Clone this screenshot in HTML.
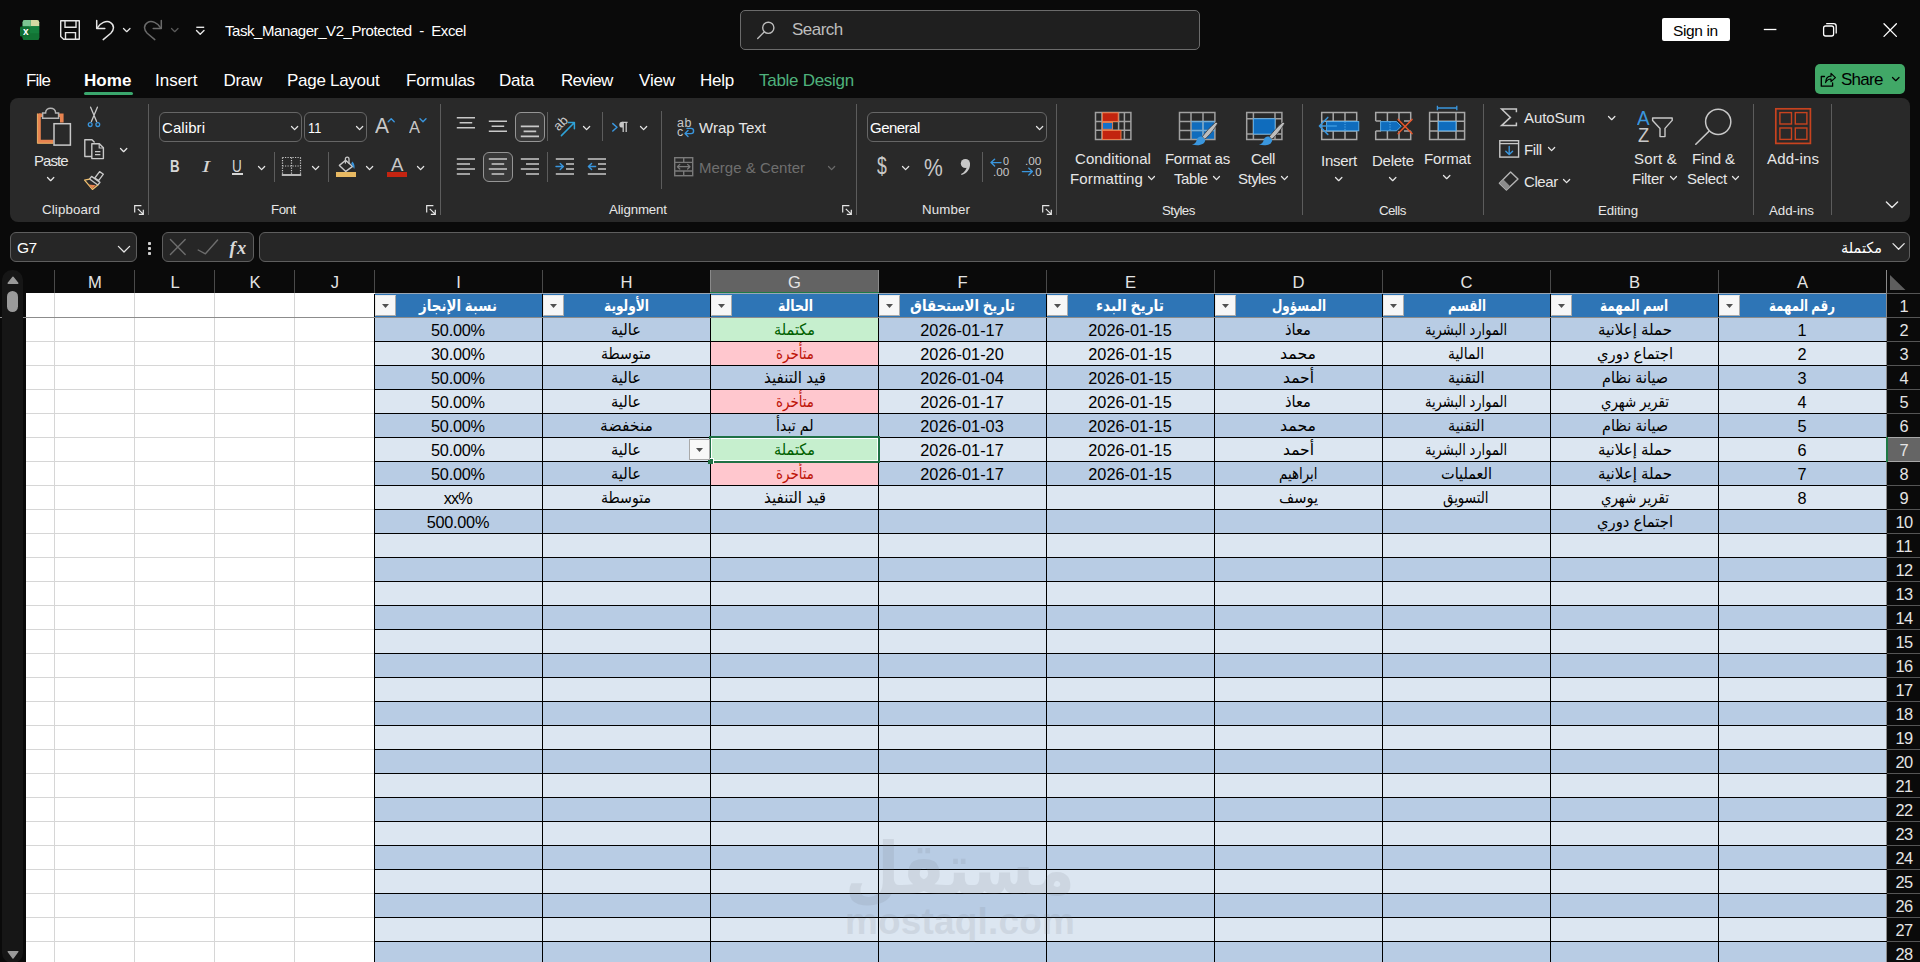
<!DOCTYPE html>
<html lang="en"><head><meta charset="utf-8"><title>Task_Manager_V2_Protected - Excel</title>
<style>
html,body{margin:0;padding:0;}
body{width:1920px;height:962px;overflow:hidden;background:#0a0a0a;position:relative;font-family:"Liberation Sans","DejaVu Sans",sans-serif;}
.b{position:absolute;box-sizing:border-box;display:block;}
.t{position:absolute;white-space:pre;line-height:1.2;transform-origin:0 0;font-family:"Liberation Sans","DejaVu Sans",sans-serif;}
.ar{direction:rtl;unicode-bidi:isolate;}
.bm{display:inline-block;width:0;height:0;vertical-align:baseline;}
svg{overflow:visible;}
.serif{font-family:"Liberation Serif","DejaVu Serif",serif;}
.wm{opacity:.13;}

</style></head>
<body>
<span class="t " style="font-size:15px;color:#ffffff;letter-spacing:-0.434px;left:225.00px;top:22.00px;">Task_Manager_V2_Protected  -  Excel</span>
<div class="b" style="left:740px;top:10px;width:460px;height:40px;background:#1f1f1f;border:1px solid #6b6b6b;border-radius:5px;"></div>
<span class="t " style="font-size:17px;color:#bdbdbd;letter-spacing:-0.523px;left:792.00px;top:20.00px;">Search</span>
<div class="b" style="left:1662px;top:18px;width:68px;height:23px;background:#ffffff;border-radius:2px;"></div>
<span class="t " style="font-size:15.5px;color:#000;letter-spacing:-0.370px;left:1673.00px;top:22.00px;">Sign in</span>
<div class="b" style="left:1815px;top:64px;width:90px;height:30px;background:#41a867;border-radius:5px;"></div>
<span class="t " style="font-size:17px;color:#000;letter-spacing:-0.750px;left:1841.00px;top:69.50px;">Share</span>
<span class="t " style="font-size:17px;color:#fff;letter-spacing:-0.830px;left:26.00px;top:71.00px;">File</span>
<span class="t " style="font-size:17px;color:#fff;font-weight:700;letter-spacing:0.076px;left:84.00px;top:71.00px;">Home</span>
<span class="t " style="font-size:17px;color:#fff;letter-spacing:-0.006px;left:155.00px;top:71.00px;">Insert</span>
<span class="t " style="font-size:17px;color:#fff;letter-spacing:-0.335px;left:223.50px;top:71.00px;">Draw</span>
<span class="t " style="font-size:17px;color:#fff;letter-spacing:-0.283px;left:287.00px;top:71.00px;">Page Layout</span>
<span class="t " style="font-size:17px;color:#fff;letter-spacing:-0.248px;left:406.00px;top:71.00px;">Formulas</span>
<span class="t " style="font-size:17px;color:#fff;letter-spacing:-0.263px;left:499.00px;top:71.00px;">Data</span>
<span class="t " style="font-size:17px;color:#fff;letter-spacing:-0.682px;left:561.00px;top:71.00px;">Review</span>
<span class="t " style="font-size:17px;color:#fff;letter-spacing:-0.156px;left:639.00px;top:71.00px;">View</span>
<span class="t " style="font-size:17px;color:#fff;letter-spacing:-0.277px;left:700.00px;top:71.00px;">Help</span>
<span class="t " style="font-size:17px;color:#4fb27c;letter-spacing:-0.285px;left:759.00px;top:71.00px;">Table Design</span>
<div class="b" style="left:84px;top:92px;width:49px;height:3px;background:#3aa76d;border-radius:1.5px;"></div>
<div class="b" style="left:10px;top:98px;width:1900px;height:124px;background:#292929;border-radius:8px;"></div>
<div class="b" style="left:148px;top:104px;width:1px;height:111px;background:#5c5c5c;"></div>
<div class="b" style="left:440px;top:104px;width:1px;height:111px;background:#5c5c5c;"></div>
<div class="b" style="left:856px;top:104px;width:1px;height:111px;background:#5c5c5c;"></div>
<div class="b" style="left:1056px;top:104px;width:1px;height:111px;background:#5c5c5c;"></div>
<div class="b" style="left:1302px;top:104px;width:1px;height:111px;background:#5c5c5c;"></div>
<div class="b" style="left:1483px;top:104px;width:1px;height:111px;background:#5c5c5c;"></div>
<div class="b" style="left:1753px;top:104px;width:1px;height:111px;background:#5c5c5c;"></div>
<div class="b" style="left:1831px;top:104px;width:1px;height:111px;background:#5c5c5c;"></div>
<div class="b" style="left:274px;top:152px;width:1px;height:30px;background:#5c5c5c;"></div>
<div class="b" style="left:328px;top:152px;width:1px;height:30px;background:#5c5c5c;"></div>
<div class="b" style="left:547px;top:112px;width:1px;height:29px;background:#5c5c5c;"></div>
<div class="b" style="left:602px;top:112px;width:1px;height:29px;background:#5c5c5c;"></div>
<div class="b" style="left:547px;top:152px;width:1px;height:30px;background:#5c5c5c;"></div>
<div class="b" style="left:661px;top:111px;width:1px;height:78px;background:#5c5c5c;"></div>
<div class="b" style="left:982px;top:152px;width:1px;height:30px;background:#5c5c5c;"></div>
<span class="t " style="font-size:13.3px;color:#e6e6e6;letter-spacing:0.127px;left:42.00px;top:202.00px;">Clipboard</span>
<span class="t " style="font-size:13.3px;color:#e6e6e6;letter-spacing:-0.460px;left:271.00px;top:202.00px;">Font</span>
<span class="t " style="font-size:13.3px;color:#e6e6e6;letter-spacing:-0.134px;left:609.00px;top:202.00px;">Alignment</span>
<span class="t " style="font-size:13.3px;color:#e6e6e6;letter-spacing:0.128px;left:922.00px;top:202.00px;">Number</span>
<span class="t " style="font-size:13.3px;color:#e6e6e6;letter-spacing:-0.585px;left:1162.00px;top:203.00px;">Styles</span>
<span class="t " style="font-size:13.3px;color:#e6e6e6;letter-spacing:-0.569px;left:1379.00px;top:203.00px;">Cells</span>
<span class="t " style="font-size:13.3px;color:#e6e6e6;letter-spacing:-0.103px;left:1598.00px;top:203.00px;">Editing</span>
<span class="t " style="font-size:13.3px;color:#e6e6e6;letter-spacing:-0.014px;left:1769.00px;top:203.00px;">Add-ins</span>
<span class="t " style="font-size:15px;color:#e6e6e6;letter-spacing:-0.969px;left:34.00px;top:152.00px;">Paste</span>
<div class="b" style="left:159px;top:112px;width:143px;height:30px;background:#292929;border:1px solid #666;border-radius:6px;"></div>
<div class="b" style="left:304px;top:112px;width:63px;height:30px;background:#292929;border:1px solid #666;border-radius:6px;"></div>
<span class="t " style="font-size:15px;color:#fff;letter-spacing:0.075px;left:162.00px;top:119.00px;">Calibri</span>
<span class="t " style="font-size:15px;color:#fff;transform:scaleX(0.8473);left:308.40px;top:119.00px;">11</span>
<span class="t " style="font-size:17px;color:#d6d6d6;font-weight:700;transform:scaleX(0.7817);left:169.60px;top:156.80px;">B</span>
<span class="t serif" style="font-size:17.5px;color:#d6d6d6;font-style:italic;transform:scaleX(1.3727);left:202.00px;top:155.80px;">I</span>
<span class="t " style="font-size:16.8px;color:#d6d6d6;transform:scaleX(0.8082);left:232.40px;top:156.80px;">U</span>
<div class="b" style="left:231.5px;top:173px;width:11.7px;height:1.8px;background:#d6d6d6;"></div>
<div class="b" style="left:515px;top:112px;width:30px;height:30px;background:#383838;border:1px solid #959595;border-radius:6px;"></div>
<div class="b" style="left:483px;top:152px;width:30px;height:30px;background:#383838;border:1px solid #959595;border-radius:6px;"></div>
<span class="t " style="font-size:15px;color:#e6e6e6;left:699.00px;top:119.00px;">Wrap Text</span>
<span class="t " style="font-size:15px;color:#6f6f6f;letter-spacing:0.008px;left:699.00px;top:159.00px;">Merge &amp; Center</span>
<div class="b" style="left:867px;top:112px;width:180px;height:30px;background:#292929;border:1px solid #666;border-radius:6px;"></div>
<span class="t " style="font-size:15px;color:#fff;letter-spacing:-0.519px;left:870.00px;top:119.00px;">General</span>
<span class="t " style="font-size:23.5px;color:#c8c8c8;transform:scaleX(0.7493);left:876.60px;top:152.40px;">$</span>
<span class="t " style="font-size:24.5px;color:#c8c8c8;transform:scaleX(0.8625);left:923.60px;top:153.00px;">%</span>
<span class="t " style="font-size:15px;color:#e6e6e6;letter-spacing:0.089px;left:1075.00px;top:149.60px;">Conditional</span>
<span class="t " style="font-size:15px;color:#e6e6e6;letter-spacing:0.137px;left:1070.00px;top:169.60px;">Formatting</span>
<span class="t " style="font-size:15px;color:#e6e6e6;letter-spacing:-0.296px;left:1165.00px;top:149.60px;">Format as</span>
<span class="t " style="font-size:15px;color:#e6e6e6;letter-spacing:-0.413px;left:1174.00px;top:169.60px;">Table</span>
<span class="t " style="font-size:15px;color:#e6e6e6;letter-spacing:-0.527px;left:1251.00px;top:149.60px;">Cell</span>
<span class="t " style="font-size:15px;color:#e6e6e6;letter-spacing:-0.520px;left:1238.00px;top:169.60px;">Styles</span>
<span class="t " style="font-size:15px;color:#e6e6e6;letter-spacing:-0.276px;left:1321.00px;top:151.80px;">Insert</span>
<span class="t " style="font-size:15px;color:#e6e6e6;letter-spacing:-0.247px;left:1372.00px;top:151.80px;">Delete</span>
<span class="t " style="font-size:15px;color:#e6e6e6;letter-spacing:-0.094px;left:1424.00px;top:149.60px;">Format</span>
<span class="t " style="font-size:15px;color:#e6e6e6;letter-spacing:-0.108px;left:1524.00px;top:109.00px;">AutoSum</span>
<span class="t " style="font-size:15px;color:#e6e6e6;letter-spacing:-0.335px;left:1524.00px;top:141.00px;">Fill</span>
<span class="t " style="font-size:15px;color:#e6e6e6;letter-spacing:-0.413px;left:1524.00px;top:173.00px;">Clear</span>
<span class="t " style="font-size:15px;color:#e6e6e6;letter-spacing:0.239px;left:1634.00px;top:149.60px;">Sort &amp;</span>
<span class="t " style="font-size:15px;color:#e6e6e6;letter-spacing:-0.244px;left:1632.00px;top:169.60px;">Filter</span>
<span class="t " style="font-size:15px;color:#e6e6e6;letter-spacing:-0.065px;left:1692.00px;top:149.60px;">Find &amp;</span>
<span class="t " style="font-size:15px;color:#e6e6e6;letter-spacing:-0.310px;left:1687.00px;top:169.60px;">Select</span>
<span class="t " style="font-size:15px;color:#e6e6e6;letter-spacing:0.175px;left:1767.00px;top:150.00px;">Add-ins</span>
<div class="b" style="left:10px;top:232px;width:127px;height:30px;background:#262626;border:1px solid #5e5e5e;border-radius:6px;"></div>
<span class="t " style="font-size:15.5px;color:#fff;letter-spacing:-0.458px;left:17.00px;top:238.50px;">G7</span>
<div class="b" style="left:162px;top:232px;width:92px;height:30px;background:#262626;border:1px solid #5e5e5e;border-radius:6px;"></div>
<div class="b" style="left:259px;top:232px;width:1651px;height:30px;background:#262626;border:1px solid #5e5e5e;border-radius:6px;"></div>
<span class="t ar" style="font-size:15px;color:#fff;transform:scaleX(0.9640);left:1841.00px;top:239.00px;">مكتملة</span>
<span class="t serif" style="font-size:18.5px;color:#d8d8d8;font-weight:700;font-style:italic;letter-spacing:1.385px;left:229.50px;top:236.50px;">fx</span>
<div class="b" style="left:26px;top:293px;width:1861px;height:669px;background:#ffffff;"></div>
<div class="b" style="left:54px;top:270px;width:1px;height:23px;background:#4a4a4a;"></div>
<div class="b" style="left:134px;top:270px;width:1px;height:23px;background:#4a4a4a;"></div>
<div class="b" style="left:214px;top:270px;width:1px;height:23px;background:#4a4a4a;"></div>
<div class="b" style="left:294px;top:270px;width:1px;height:23px;background:#4a4a4a;"></div>
<div class="b" style="left:374px;top:270px;width:1px;height:23px;background:#4a4a4a;"></div>
<div class="b" style="left:542px;top:270px;width:1px;height:23px;background:#4a4a4a;"></div>
<div class="b" style="left:710px;top:270px;width:1px;height:23px;background:#4a4a4a;"></div>
<div class="b" style="left:878px;top:270px;width:1px;height:23px;background:#4a4a4a;"></div>
<div class="b" style="left:1046px;top:270px;width:1px;height:23px;background:#4a4a4a;"></div>
<div class="b" style="left:1214px;top:270px;width:1px;height:23px;background:#4a4a4a;"></div>
<div class="b" style="left:1382px;top:270px;width:1px;height:23px;background:#4a4a4a;"></div>
<div class="b" style="left:1550px;top:270px;width:1px;height:23px;background:#4a4a4a;"></div>
<div class="b" style="left:1718px;top:270px;width:1px;height:23px;background:#4a4a4a;"></div>
<div class="b" style="left:1886px;top:270px;width:1px;height:23px;background:#4a4a4a;"></div>
<div class="b" style="left:1886px;top:270px;width:1px;height:692px;background:#8a8a8a;"></div>
<div class="b" style="left:710px;top:270px;width:169px;height:22px;background:#636363;"></div>
<div class="b" style="left:710px;top:270px;width:1px;height:22px;background:#8a8a8a;"></div>
<div class="b" style="left:878px;top:270px;width:1px;height:22px;background:#8a8a8a;"></div>
<div class="b" style="left:710px;top:292px;width:169px;height:2px;background:#1e7a45;"></div>
<span class="t " style="font-size:16.6px;color:#e4e4e4;left:456.19px;top:273.00px;">I</span>
<span class="t " style="font-size:16.6px;color:#e4e4e4;left:620.51px;top:273.00px;">H</span>
<span class="t " style="font-size:16.6px;color:#e4e4e4;left:788.04px;top:273.00px;">G</span>
<span class="t " style="font-size:16.6px;color:#e4e4e4;left:957.43px;top:273.00px;">F</span>
<span class="t " style="font-size:16.6px;color:#e4e4e4;left:1124.96px;top:273.00px;">E</span>
<span class="t " style="font-size:16.6px;color:#e4e4e4;left:1292.51px;top:273.00px;">D</span>
<span class="t " style="font-size:16.6px;color:#e4e4e4;left:1460.51px;top:273.00px;">C</span>
<span class="t " style="font-size:16.6px;color:#e4e4e4;left:1628.96px;top:273.00px;">B</span>
<span class="t " style="font-size:16.6px;color:#e4e4e4;left:1796.96px;top:273.00px;">A</span>
<span class="t " style="font-size:16.6px;color:#e4e4e4;left:88.09px;top:273.00px;">M</span>
<span class="t " style="font-size:16.6px;color:#e4e4e4;left:170.38px;top:273.00px;">L</span>
<span class="t " style="font-size:16.6px;color:#e4e4e4;left:249.46px;top:273.00px;">K</span>
<span class="t " style="font-size:16.6px;color:#e4e4e4;left:330.85px;top:273.00px;">J</span>
<div class="b" style="left:54px;top:293px;width:1px;height:669px;background:#d6d6d6;"></div>
<div class="b" style="left:134px;top:293px;width:1px;height:669px;background:#d6d6d6;"></div>
<div class="b" style="left:214px;top:293px;width:1px;height:669px;background:#d6d6d6;"></div>
<div class="b" style="left:294px;top:293px;width:1px;height:669px;background:#d6d6d6;"></div>
<div class="b" style="left:26px;top:341px;width:348px;height:1px;background:#d6d6d6;"></div>
<div class="b" style="left:26px;top:365px;width:348px;height:1px;background:#d6d6d6;"></div>
<div class="b" style="left:26px;top:389px;width:348px;height:1px;background:#d6d6d6;"></div>
<div class="b" style="left:26px;top:413px;width:348px;height:1px;background:#d6d6d6;"></div>
<div class="b" style="left:26px;top:437px;width:348px;height:1px;background:#d6d6d6;"></div>
<div class="b" style="left:26px;top:461px;width:348px;height:1px;background:#d6d6d6;"></div>
<div class="b" style="left:26px;top:485px;width:348px;height:1px;background:#d6d6d6;"></div>
<div class="b" style="left:26px;top:509px;width:348px;height:1px;background:#d6d6d6;"></div>
<div class="b" style="left:26px;top:533px;width:348px;height:1px;background:#d6d6d6;"></div>
<div class="b" style="left:26px;top:557px;width:348px;height:1px;background:#d6d6d6;"></div>
<div class="b" style="left:26px;top:581px;width:348px;height:1px;background:#d6d6d6;"></div>
<div class="b" style="left:26px;top:605px;width:348px;height:1px;background:#d6d6d6;"></div>
<div class="b" style="left:26px;top:629px;width:348px;height:1px;background:#d6d6d6;"></div>
<div class="b" style="left:26px;top:653px;width:348px;height:1px;background:#d6d6d6;"></div>
<div class="b" style="left:26px;top:677px;width:348px;height:1px;background:#d6d6d6;"></div>
<div class="b" style="left:26px;top:701px;width:348px;height:1px;background:#d6d6d6;"></div>
<div class="b" style="left:26px;top:725px;width:348px;height:1px;background:#d6d6d6;"></div>
<div class="b" style="left:26px;top:749px;width:348px;height:1px;background:#d6d6d6;"></div>
<div class="b" style="left:26px;top:773px;width:348px;height:1px;background:#d6d6d6;"></div>
<div class="b" style="left:26px;top:797px;width:348px;height:1px;background:#d6d6d6;"></div>
<div class="b" style="left:26px;top:821px;width:348px;height:1px;background:#d6d6d6;"></div>
<div class="b" style="left:26px;top:845px;width:348px;height:1px;background:#d6d6d6;"></div>
<div class="b" style="left:26px;top:869px;width:348px;height:1px;background:#d6d6d6;"></div>
<div class="b" style="left:26px;top:893px;width:348px;height:1px;background:#d6d6d6;"></div>
<div class="b" style="left:26px;top:917px;width:348px;height:1px;background:#d6d6d6;"></div>
<div class="b" style="left:26px;top:941px;width:348px;height:1px;background:#d6d6d6;"></div>
<div class="b" style="left:26px;top:965px;width:348px;height:1px;background:#d6d6d6;"></div>
<div class="b" style="left:375px;top:293px;width:1511px;height:1px;background:#9aa7b5;"></div>
<div class="b" style="left:375px;top:294px;width:1511px;height:23px;background:#2e75b6;"></div>
<div class="b" style="left:375px;top:318px;width:1511px;height:23px;background:#b8cce4;"></div>
<div class="b" style="left:375px;top:342px;width:1511px;height:23px;background:#dce6f1;"></div>
<div class="b" style="left:375px;top:366px;width:1511px;height:23px;background:#b8cce4;"></div>
<div class="b" style="left:375px;top:390px;width:1511px;height:23px;background:#dce6f1;"></div>
<div class="b" style="left:375px;top:414px;width:1511px;height:23px;background:#b8cce4;"></div>
<div class="b" style="left:375px;top:438px;width:1511px;height:23px;background:#dce6f1;"></div>
<div class="b" style="left:375px;top:462px;width:1511px;height:23px;background:#b8cce4;"></div>
<div class="b" style="left:375px;top:486px;width:1511px;height:23px;background:#dce6f1;"></div>
<div class="b" style="left:375px;top:510px;width:1511px;height:23px;background:#b8cce4;"></div>
<div class="b" style="left:375px;top:534px;width:1511px;height:23px;background:#dce6f1;"></div>
<div class="b" style="left:375px;top:558px;width:1511px;height:23px;background:#b8cce4;"></div>
<div class="b" style="left:375px;top:582px;width:1511px;height:23px;background:#dce6f1;"></div>
<div class="b" style="left:375px;top:606px;width:1511px;height:23px;background:#b8cce4;"></div>
<div class="b" style="left:375px;top:630px;width:1511px;height:23px;background:#dce6f1;"></div>
<div class="b" style="left:375px;top:654px;width:1511px;height:23px;background:#b8cce4;"></div>
<div class="b" style="left:375px;top:678px;width:1511px;height:23px;background:#dce6f1;"></div>
<div class="b" style="left:375px;top:702px;width:1511px;height:23px;background:#b8cce4;"></div>
<div class="b" style="left:375px;top:726px;width:1511px;height:23px;background:#dce6f1;"></div>
<div class="b" style="left:375px;top:750px;width:1511px;height:23px;background:#b8cce4;"></div>
<div class="b" style="left:375px;top:774px;width:1511px;height:23px;background:#dce6f1;"></div>
<div class="b" style="left:375px;top:798px;width:1511px;height:23px;background:#b8cce4;"></div>
<div class="b" style="left:375px;top:822px;width:1511px;height:23px;background:#dce6f1;"></div>
<div class="b" style="left:375px;top:846px;width:1511px;height:23px;background:#b8cce4;"></div>
<div class="b" style="left:375px;top:870px;width:1511px;height:23px;background:#dce6f1;"></div>
<div class="b" style="left:375px;top:894px;width:1511px;height:23px;background:#b8cce4;"></div>
<div class="b" style="left:375px;top:918px;width:1511px;height:23px;background:#dce6f1;"></div>
<div class="b" style="left:375px;top:942px;width:1511px;height:23px;background:#b8cce4;"></div>
<div class="b" style="left:375px;top:966px;width:1511px;height:23px;background:#dce6f1;"></div>
<div class="b" style="left:711px;top:318px;width:167px;height:23px;background:#c6efce;"></div>
<div class="b" style="left:711px;top:342px;width:167px;height:23px;background:#ffc7ce;"></div>
<div class="b" style="left:711px;top:390px;width:167px;height:23px;background:#ffc7ce;"></div>
<div class="b" style="left:711px;top:438px;width:167px;height:23px;background:#c6efce;"></div>
<div class="b" style="left:711px;top:462px;width:167px;height:23px;background:#ffc7ce;"></div>
<div class="b" style="left:374px;top:341px;width:1513px;height:1px;background:#000;"></div>
<div class="b" style="left:374px;top:365px;width:1513px;height:1px;background:#000;"></div>
<div class="b" style="left:374px;top:389px;width:1513px;height:1px;background:#000;"></div>
<div class="b" style="left:374px;top:413px;width:1513px;height:1px;background:#000;"></div>
<div class="b" style="left:374px;top:437px;width:1513px;height:1px;background:#000;"></div>
<div class="b" style="left:374px;top:461px;width:1513px;height:1px;background:#000;"></div>
<div class="b" style="left:374px;top:485px;width:1513px;height:1px;background:#000;"></div>
<div class="b" style="left:374px;top:509px;width:1513px;height:1px;background:#000;"></div>
<div class="b" style="left:374px;top:533px;width:1513px;height:1px;background:#000;"></div>
<div class="b" style="left:374px;top:557px;width:1513px;height:1px;background:#000;"></div>
<div class="b" style="left:374px;top:581px;width:1513px;height:1px;background:#000;"></div>
<div class="b" style="left:374px;top:605px;width:1513px;height:1px;background:#000;"></div>
<div class="b" style="left:374px;top:629px;width:1513px;height:1px;background:#000;"></div>
<div class="b" style="left:374px;top:653px;width:1513px;height:1px;background:#000;"></div>
<div class="b" style="left:374px;top:677px;width:1513px;height:1px;background:#000;"></div>
<div class="b" style="left:374px;top:701px;width:1513px;height:1px;background:#000;"></div>
<div class="b" style="left:374px;top:725px;width:1513px;height:1px;background:#000;"></div>
<div class="b" style="left:374px;top:749px;width:1513px;height:1px;background:#000;"></div>
<div class="b" style="left:374px;top:773px;width:1513px;height:1px;background:#000;"></div>
<div class="b" style="left:374px;top:797px;width:1513px;height:1px;background:#000;"></div>
<div class="b" style="left:374px;top:821px;width:1513px;height:1px;background:#000;"></div>
<div class="b" style="left:374px;top:845px;width:1513px;height:1px;background:#000;"></div>
<div class="b" style="left:374px;top:869px;width:1513px;height:1px;background:#000;"></div>
<div class="b" style="left:374px;top:893px;width:1513px;height:1px;background:#000;"></div>
<div class="b" style="left:374px;top:917px;width:1513px;height:1px;background:#000;"></div>
<div class="b" style="left:374px;top:941px;width:1513px;height:1px;background:#000;"></div>
<div class="b" style="left:374px;top:965px;width:1513px;height:1px;background:#000;"></div>
<div class="b" style="left:374px;top:294px;width:1px;height:668px;background:#000;"></div>
<div class="b" style="left:542px;top:294px;width:1px;height:668px;background:#000;"></div>
<div class="b" style="left:710px;top:294px;width:1px;height:668px;background:#000;"></div>
<div class="b" style="left:878px;top:294px;width:1px;height:668px;background:#000;"></div>
<div class="b" style="left:1046px;top:294px;width:1px;height:668px;background:#000;"></div>
<div class="b" style="left:1214px;top:294px;width:1px;height:668px;background:#000;"></div>
<div class="b" style="left:1382px;top:294px;width:1px;height:668px;background:#000;"></div>
<div class="b" style="left:1550px;top:294px;width:1px;height:668px;background:#000;"></div>
<div class="b" style="left:1718px;top:294px;width:1px;height:668px;background:#000;"></div>
<div class="b" style="left:0px;top:317px;width:1920px;height:1px;background:#8c8c8c;"></div>
<div class="b" style="left:1887px;top:270px;width:33px;height:692px;background:#0a0a0a;"></div>
<div class="b" style="left:1887px;top:293px;width:33px;height:1px;background:#555555;"></div>
<div class="b" style="left:1887px;top:317px;width:33px;height:1px;background:#555555;"></div>
<div class="b" style="left:1887px;top:341px;width:33px;height:1px;background:#555555;"></div>
<div class="b" style="left:1887px;top:365px;width:33px;height:1px;background:#555555;"></div>
<div class="b" style="left:1887px;top:389px;width:33px;height:1px;background:#555555;"></div>
<div class="b" style="left:1887px;top:413px;width:33px;height:1px;background:#555555;"></div>
<div class="b" style="left:1887px;top:437px;width:33px;height:1px;background:#555555;"></div>
<div class="b" style="left:1887px;top:461px;width:33px;height:1px;background:#555555;"></div>
<div class="b" style="left:1887px;top:485px;width:33px;height:1px;background:#555555;"></div>
<div class="b" style="left:1887px;top:509px;width:33px;height:1px;background:#555555;"></div>
<div class="b" style="left:1887px;top:533px;width:33px;height:1px;background:#555555;"></div>
<div class="b" style="left:1887px;top:557px;width:33px;height:1px;background:#555555;"></div>
<div class="b" style="left:1887px;top:581px;width:33px;height:1px;background:#555555;"></div>
<div class="b" style="left:1887px;top:605px;width:33px;height:1px;background:#555555;"></div>
<div class="b" style="left:1887px;top:629px;width:33px;height:1px;background:#555555;"></div>
<div class="b" style="left:1887px;top:653px;width:33px;height:1px;background:#555555;"></div>
<div class="b" style="left:1887px;top:677px;width:33px;height:1px;background:#555555;"></div>
<div class="b" style="left:1887px;top:701px;width:33px;height:1px;background:#555555;"></div>
<div class="b" style="left:1887px;top:725px;width:33px;height:1px;background:#555555;"></div>
<div class="b" style="left:1887px;top:749px;width:33px;height:1px;background:#555555;"></div>
<div class="b" style="left:1887px;top:773px;width:33px;height:1px;background:#555555;"></div>
<div class="b" style="left:1887px;top:797px;width:33px;height:1px;background:#555555;"></div>
<div class="b" style="left:1887px;top:821px;width:33px;height:1px;background:#555555;"></div>
<div class="b" style="left:1887px;top:845px;width:33px;height:1px;background:#555555;"></div>
<div class="b" style="left:1887px;top:869px;width:33px;height:1px;background:#555555;"></div>
<div class="b" style="left:1887px;top:893px;width:33px;height:1px;background:#555555;"></div>
<div class="b" style="left:1887px;top:917px;width:33px;height:1px;background:#555555;"></div>
<div class="b" style="left:1887px;top:941px;width:33px;height:1px;background:#555555;"></div>
<div class="b" style="left:1888px;top:438px;width:32px;height:23px;background:#656565;"></div>
<div class="b" style="left:1888px;top:437px;width:32px;height:1px;background:#a8a8a8;"></div>
<div class="b" style="left:1888px;top:461px;width:32px;height:1px;background:#a8a8a8;"></div>
<div class="b" style="left:1886px;top:437px;width:2px;height:25px;background:#1e7a45;"></div>
<span class="t " style="font-size:16.4px;color:#e4e4e4;left:1899.54px;top:297.20px;">1</span>
<span class="t " style="font-size:16.4px;color:#e4e4e4;left:1899.54px;top:321.20px;">2</span>
<span class="t " style="font-size:16.4px;color:#e4e4e4;left:1899.54px;top:345.20px;">3</span>
<span class="t " style="font-size:16.4px;color:#e4e4e4;left:1899.54px;top:369.20px;">4</span>
<span class="t " style="font-size:16.4px;color:#e4e4e4;left:1899.54px;top:393.20px;">5</span>
<span class="t " style="font-size:16.4px;color:#e4e4e4;left:1899.54px;top:417.20px;">6</span>
<span class="t " style="font-size:16.4px;color:#e4e4e4;left:1899.54px;top:441.20px;">7</span>
<span class="t " style="font-size:16.4px;color:#e4e4e4;left:1899.54px;top:465.20px;">8</span>
<span class="t " style="font-size:16.4px;color:#e4e4e4;left:1899.54px;top:489.20px;">9</span>
<span class="t " style="font-size:16.4px;color:#e4e4e4;letter-spacing:-0.823px;left:1895.60px;top:513.20px;">10</span>
<span class="t " style="font-size:16.4px;color:#e4e4e4;letter-spacing:-0.010px;left:1895.60px;top:537.20px;">11</span>
<span class="t " style="font-size:16.4px;color:#e4e4e4;letter-spacing:-0.823px;left:1895.60px;top:561.20px;">12</span>
<span class="t " style="font-size:16.4px;color:#e4e4e4;letter-spacing:-0.823px;left:1895.60px;top:585.20px;">13</span>
<span class="t " style="font-size:16.4px;color:#e4e4e4;letter-spacing:-0.823px;left:1895.60px;top:609.20px;">14</span>
<span class="t " style="font-size:16.4px;color:#e4e4e4;letter-spacing:-0.823px;left:1895.60px;top:633.20px;">15</span>
<span class="t " style="font-size:16.4px;color:#e4e4e4;letter-spacing:-0.823px;left:1895.60px;top:657.20px;">16</span>
<span class="t " style="font-size:16.4px;color:#e4e4e4;letter-spacing:-0.823px;left:1895.60px;top:681.20px;">17</span>
<span class="t " style="font-size:16.4px;color:#e4e4e4;letter-spacing:-0.823px;left:1895.60px;top:705.20px;">18</span>
<span class="t " style="font-size:16.4px;color:#e4e4e4;letter-spacing:-0.823px;left:1895.60px;top:729.20px;">19</span>
<span class="t " style="font-size:16.4px;color:#e4e4e4;letter-spacing:-0.823px;left:1895.60px;top:753.20px;">20</span>
<span class="t " style="font-size:16.4px;color:#e4e4e4;letter-spacing:-0.823px;left:1895.60px;top:777.20px;">21</span>
<span class="t " style="font-size:16.4px;color:#e4e4e4;letter-spacing:-0.823px;left:1895.60px;top:801.20px;">22</span>
<span class="t " style="font-size:16.4px;color:#e4e4e4;letter-spacing:-0.823px;left:1895.60px;top:825.20px;">23</span>
<span class="t " style="font-size:16.4px;color:#e4e4e4;letter-spacing:-0.823px;left:1895.60px;top:849.20px;">24</span>
<span class="t " style="font-size:16.4px;color:#e4e4e4;letter-spacing:-0.823px;left:1895.60px;top:873.20px;">25</span>
<span class="t " style="font-size:16.4px;color:#e4e4e4;letter-spacing:-0.823px;left:1895.60px;top:897.20px;">26</span>
<span class="t " style="font-size:16.4px;color:#e4e4e4;letter-spacing:-0.823px;left:1895.60px;top:921.20px;">27</span>
<span class="t " style="font-size:16.4px;color:#e4e4e4;letter-spacing:-0.823px;left:1895.60px;top:945.20px;">28</span>
<svg class="b" style="left:1888px;top:272px;" width="20" height="20" viewBox="0 0 20 20"><path d="M2 3 L2 18 L17.5 18 Z" fill="#5e5e5e"/></svg>
<span class="t ar" style="font-size:15.5px;color:#fff;font-weight:700;transform:scaleX(0.8646);left:419.00px;top:296.60px;">نسبة الإنجاز</span>
<span class="t ar" style="font-size:15.5px;color:#fff;font-weight:700;transform:scaleX(0.7860);left:604.00px;top:296.60px;">الأولوية</span>
<span class="t ar" style="font-size:15.5px;color:#fff;font-weight:700;transform:scaleX(0.8072);left:778.00px;top:296.60px;">الحالة</span>
<span class="t ar" style="font-size:15.5px;color:#fff;font-weight:700;transform:scaleX(0.8586);left:910.00px;top:296.60px;">تاريخ الاستحقاق</span>
<span class="t ar" style="font-size:15.5px;color:#fff;font-weight:700;transform:scaleX(0.8924);left:1096.00px;top:296.60px;">تاريخ البدء</span>
<span class="t ar" style="font-size:15.5px;color:#fff;font-weight:700;transform:scaleX(0.7702);left:1272.00px;top:296.60px;">المسؤول</span>
<span class="t ar" style="font-size:15.5px;color:#fff;font-weight:700;transform:scaleX(0.7567);left:1447.50px;top:296.60px;">القسم</span>
<span class="t ar" style="font-size:15.5px;color:#fff;font-weight:700;transform:scaleX(0.7677);left:1600.00px;top:296.60px;">اسم المهمة</span>
<span class="t ar" style="font-size:15.5px;color:#fff;font-weight:700;transform:scaleX(0.7578);left:1769.00px;top:296.60px;">رقم المهمة</span>
<div class="b" style="left:375px;top:295px;width:21px;height:21px;background:#f7f7f7;border:1px solid #ababab;border-left-color:#e8e8e8;border-top-color:#e8e8e8;"></div>
<svg class="b" style="left:381px;top:303px;" width="9" height="6" viewBox="0 0 9 6"><path d="M1 1 L8 1 L4.5 5 Z" fill="#505050"/></svg>
<div class="b" style="left:543px;top:295px;width:21px;height:21px;background:#f7f7f7;border:1px solid #ababab;border-left-color:#e8e8e8;border-top-color:#e8e8e8;"></div>
<svg class="b" style="left:549px;top:303px;" width="9" height="6" viewBox="0 0 9 6"><path d="M1 1 L8 1 L4.5 5 Z" fill="#505050"/></svg>
<div class="b" style="left:711px;top:295px;width:21px;height:21px;background:#f7f7f7;border:1px solid #ababab;border-left-color:#e8e8e8;border-top-color:#e8e8e8;"></div>
<svg class="b" style="left:717px;top:303px;" width="9" height="6" viewBox="0 0 9 6"><path d="M1 1 L8 1 L4.5 5 Z" fill="#505050"/></svg>
<div class="b" style="left:879px;top:295px;width:21px;height:21px;background:#f7f7f7;border:1px solid #ababab;border-left-color:#e8e8e8;border-top-color:#e8e8e8;"></div>
<svg class="b" style="left:885px;top:303px;" width="9" height="6" viewBox="0 0 9 6"><path d="M1 1 L8 1 L4.5 5 Z" fill="#505050"/></svg>
<div class="b" style="left:1047px;top:295px;width:21px;height:21px;background:#f7f7f7;border:1px solid #ababab;border-left-color:#e8e8e8;border-top-color:#e8e8e8;"></div>
<svg class="b" style="left:1053px;top:303px;" width="9" height="6" viewBox="0 0 9 6"><path d="M1 1 L8 1 L4.5 5 Z" fill="#505050"/></svg>
<div class="b" style="left:1215px;top:295px;width:21px;height:21px;background:#f7f7f7;border:1px solid #ababab;border-left-color:#e8e8e8;border-top-color:#e8e8e8;"></div>
<svg class="b" style="left:1221px;top:303px;" width="9" height="6" viewBox="0 0 9 6"><path d="M1 1 L8 1 L4.5 5 Z" fill="#505050"/></svg>
<div class="b" style="left:1383px;top:295px;width:21px;height:21px;background:#f7f7f7;border:1px solid #ababab;border-left-color:#e8e8e8;border-top-color:#e8e8e8;"></div>
<svg class="b" style="left:1389px;top:303px;" width="9" height="6" viewBox="0 0 9 6"><path d="M1 1 L8 1 L4.5 5 Z" fill="#505050"/></svg>
<div class="b" style="left:1551px;top:295px;width:21px;height:21px;background:#f7f7f7;border:1px solid #ababab;border-left-color:#e8e8e8;border-top-color:#e8e8e8;"></div>
<svg class="b" style="left:1557px;top:303px;" width="9" height="6" viewBox="0 0 9 6"><path d="M1 1 L8 1 L4.5 5 Z" fill="#505050"/></svg>
<div class="b" style="left:1719px;top:295px;width:21px;height:21px;background:#f7f7f7;border:1px solid #ababab;border-left-color:#e8e8e8;border-top-color:#e8e8e8;"></div>
<svg class="b" style="left:1725px;top:303px;" width="9" height="6" viewBox="0 0 9 6"><path d="M1 1 L8 1 L4.5 5 Z" fill="#505050"/></svg>
<span class="t " style="font-size:16.3px;color:#000;left:1797.47px;top:321.20px;">1</span>
<span class="t ar" style="font-size:16px;color:#000;transform:scaleX(0.9384);left:1597.50px;top:319.80px;">حملة إعلانية</span>
<span class="t ar" style="font-size:16px;color:#000;transform:scaleX(0.8130);left:1425.00px;top:319.80px;">الموارد البشرية</span>
<span class="t ar" style="font-size:16px;color:#000;transform:scaleX(0.9188);left:1285.00px;top:319.80px;">معاذ</span>
<span class="t " style="font-size:16.3px;color:#000;letter-spacing:0.021px;left:1088.25px;top:321.20px;">2026-01-15</span>
<span class="t " style="font-size:16.3px;color:#000;letter-spacing:0.021px;left:920.25px;top:321.20px;">2026-01-17</span>
<span class="t ar" style="font-size:16px;color:#006100;transform:scaleX(0.9039);left:774.00px;top:319.80px;">مكتملة</span>
<span class="t ar" style="font-size:16px;color:#000;transform:scaleX(0.9173);left:611.00px;top:319.80px;">عالية</span>
<span class="t " style="font-size:16.3px;color:#000;letter-spacing:-0.224px;left:431.00px;top:321.20px;">50.00%</span>
<span class="t " style="font-size:16.3px;color:#000;left:1797.47px;top:345.20px;">2</span>
<span class="t ar" style="font-size:16px;color:#000;transform:scaleX(0.9224);left:1596.50px;top:343.80px;">اجتماع دوري</span>
<span class="t ar" style="font-size:16px;color:#000;transform:scaleX(0.8626);left:1448.00px;top:343.80px;">المالية</span>
<span class="t ar" style="font-size:16px;color:#000;transform:scaleX(0.9850);left:1280.00px;top:343.80px;">محمد</span>
<span class="t " style="font-size:16.3px;color:#000;letter-spacing:0.021px;left:1088.25px;top:345.20px;">2026-01-15</span>
<span class="t " style="font-size:16.3px;color:#000;letter-spacing:0.021px;left:920.25px;top:345.20px;">2026-01-20</span>
<span class="t ar" style="font-size:16px;color:#be1408;transform:scaleX(0.8375);left:775.50px;top:343.80px;">متأخرة</span>
<span class="t ar" style="font-size:16px;color:#000;transform:scaleX(0.8806);left:601.00px;top:343.80px;">متوسطة</span>
<span class="t " style="font-size:16.3px;color:#000;letter-spacing:-0.224px;left:431.00px;top:345.20px;">30.00%</span>
<span class="t " style="font-size:16.3px;color:#000;left:1797.47px;top:369.20px;">3</span>
<span class="t ar" style="font-size:16px;color:#000;transform:scaleX(0.9026);left:1601.50px;top:367.80px;">صيانة نظام</span>
<span class="t ar" style="font-size:16px;color:#000;transform:scaleX(0.9016);left:1447.75px;top:367.80px;">التقنية</span>
<span class="t ar" style="font-size:16px;color:#000;transform:scaleX(0.9692);left:1282.50px;top:367.80px;">أحمد</span>
<span class="t " style="font-size:16.3px;color:#000;letter-spacing:0.021px;left:1088.25px;top:369.20px;">2026-01-15</span>
<span class="t " style="font-size:16.3px;color:#000;letter-spacing:0.021px;left:920.25px;top:369.20px;">2026-01-04</span>
<span class="t ar" style="font-size:16px;color:#000;transform:scaleX(0.9448);left:763.50px;top:367.80px;">قيد التنفيذ</span>
<span class="t ar" style="font-size:16px;color:#000;transform:scaleX(0.9173);left:611.00px;top:367.80px;">عالية</span>
<span class="t " style="font-size:16.3px;color:#000;letter-spacing:-0.224px;left:431.00px;top:369.20px;">50.00%</span>
<span class="t " style="font-size:16.3px;color:#000;left:1797.47px;top:393.20px;">4</span>
<span class="t ar" style="font-size:16px;color:#000;transform:scaleX(0.8371);left:1600.50px;top:391.80px;">تقرير شهري</span>
<span class="t ar" style="font-size:16px;color:#000;transform:scaleX(0.8130);left:1425.00px;top:391.80px;">الموارد البشرية</span>
<span class="t ar" style="font-size:16px;color:#000;transform:scaleX(0.9188);left:1285.00px;top:391.80px;">معاذ</span>
<span class="t " style="font-size:16.3px;color:#000;letter-spacing:0.021px;left:1088.25px;top:393.20px;">2026-01-15</span>
<span class="t " style="font-size:16.3px;color:#000;letter-spacing:0.021px;left:920.25px;top:393.20px;">2026-01-17</span>
<span class="t ar" style="font-size:16px;color:#be1408;transform:scaleX(0.8375);left:775.50px;top:391.80px;">متأخرة</span>
<span class="t ar" style="font-size:16px;color:#000;transform:scaleX(0.9173);left:611.00px;top:391.80px;">عالية</span>
<span class="t " style="font-size:16.3px;color:#000;letter-spacing:-0.224px;left:431.00px;top:393.20px;">50.00%</span>
<span class="t " style="font-size:16.3px;color:#000;left:1797.47px;top:417.20px;">5</span>
<span class="t ar" style="font-size:16px;color:#000;transform:scaleX(0.9026);left:1601.50px;top:415.80px;">صيانة نظام</span>
<span class="t ar" style="font-size:16px;color:#000;transform:scaleX(0.9016);left:1447.75px;top:415.80px;">التقنية</span>
<span class="t ar" style="font-size:16px;color:#000;transform:scaleX(0.9850);left:1280.00px;top:415.80px;">محمد</span>
<span class="t " style="font-size:16.3px;color:#000;letter-spacing:0.021px;left:1088.25px;top:417.20px;">2026-01-15</span>
<span class="t " style="font-size:16.3px;color:#000;letter-spacing:0.021px;left:920.25px;top:417.20px;">2026-01-03</span>
<span class="t ar" style="font-size:16px;color:#000;transform:scaleX(0.8909);left:775.75px;top:415.80px;">لم تبدأ</span>
<span class="t ar" style="font-size:16px;color:#000;transform:scaleX(0.9764);left:599.50px;top:415.80px;">منخفضة</span>
<span class="t " style="font-size:16.3px;color:#000;letter-spacing:-0.224px;left:431.00px;top:417.20px;">50.00%</span>
<span class="t " style="font-size:16.3px;color:#000;left:1797.47px;top:441.20px;">6</span>
<span class="t ar" style="font-size:16px;color:#000;transform:scaleX(0.9384);left:1597.50px;top:439.80px;">حملة إعلانية</span>
<span class="t ar" style="font-size:16px;color:#000;transform:scaleX(0.8130);left:1425.00px;top:439.80px;">الموارد البشرية</span>
<span class="t ar" style="font-size:16px;color:#000;transform:scaleX(0.9692);left:1282.50px;top:439.80px;">أحمد</span>
<span class="t " style="font-size:16.3px;color:#000;letter-spacing:0.021px;left:1088.25px;top:441.20px;">2026-01-15</span>
<span class="t " style="font-size:16.3px;color:#000;letter-spacing:0.021px;left:920.25px;top:441.20px;">2026-01-17</span>
<span class="t ar" style="font-size:16px;color:#006100;transform:scaleX(0.9039);left:774.00px;top:439.80px;">مكتملة</span>
<span class="t ar" style="font-size:16px;color:#000;transform:scaleX(0.9173);left:611.00px;top:439.80px;">عالية</span>
<span class="t " style="font-size:16.3px;color:#000;letter-spacing:-0.224px;left:431.00px;top:441.20px;">50.00%</span>
<span class="t " style="font-size:16.3px;color:#000;left:1797.47px;top:465.20px;">7</span>
<span class="t ar" style="font-size:16px;color:#000;transform:scaleX(0.9384);left:1597.50px;top:463.80px;">حملة إعلانية</span>
<span class="t ar" style="font-size:16px;color:#000;transform:scaleX(0.9049);left:1440.50px;top:463.80px;">العمليات</span>
<span class="t ar" style="font-size:16px;color:#000;transform:scaleX(0.8353);left:1278.75px;top:463.80px;">ابراهيم</span>
<span class="t " style="font-size:16.3px;color:#000;letter-spacing:0.021px;left:1088.25px;top:465.20px;">2026-01-15</span>
<span class="t " style="font-size:16.3px;color:#000;letter-spacing:0.021px;left:920.25px;top:465.20px;">2026-01-17</span>
<span class="t ar" style="font-size:16px;color:#be1408;transform:scaleX(0.8375);left:775.50px;top:463.80px;">متأخرة</span>
<span class="t ar" style="font-size:16px;color:#000;transform:scaleX(0.9173);left:611.00px;top:463.80px;">عالية</span>
<span class="t " style="font-size:16.3px;color:#000;letter-spacing:-0.224px;left:431.00px;top:465.20px;">50.00%</span>
<span class="t " style="font-size:16.3px;color:#000;left:1797.47px;top:489.20px;">8</span>
<span class="t ar" style="font-size:16px;color:#000;transform:scaleX(0.8371);left:1600.50px;top:487.80px;">تقرير شهري</span>
<span class="t ar" style="font-size:16px;color:#000;transform:scaleX(0.8351);left:1443.25px;top:487.80px;">التسويق</span>
<span class="t ar" style="font-size:16px;color:#000;transform:scaleX(0.9136);left:1278.50px;top:487.80px;">يوسف</span>
<span class="t ar" style="font-size:16px;color:#000;transform:scaleX(0.9448);left:763.50px;top:487.80px;">قيد التنفيذ</span>
<span class="t ar" style="font-size:16px;color:#000;transform:scaleX(0.8806);left:601.00px;top:487.80px;">متوسطة</span>
<span class="t " style="font-size:16.3px;color:#000;letter-spacing:-0.906px;left:443.75px;top:489.20px;">xx%</span>
<span class="t ar" style="font-size:16px;color:#000;transform:scaleX(0.9224);left:1596.50px;top:511.80px;">اجتماع دوري</span>
<span class="t " style="font-size:16.3px;color:#000;letter-spacing:-0.274px;left:426.75px;top:513.20px;">500.00%</span>
<div class="b" style="left:709px;top:436px;width:171px;height:27px;border:2px solid #1f7145;"></div>
<div class="b" style="left:711px;top:438px;width:167px;height:23px;border:1px solid #fff;"></div>
<div class="b" style="left:708px;top:458px;width:6px;height:6px;background:#fff;"></div>
<div class="b" style="left:708px;top:459px;width:5px;height:5px;background:#1f7145;"></div>
<div class="b" style="left:689px;top:439px;width:21px;height:21px;background:#f8f8f8;border:1px solid #a9a9a9;"></div>
<svg class="b" style="left:695px;top:447px;" width="9" height="6" viewBox="0 0 9 6"><path d="M1 1 L8 1 L4.5 5 Z" fill="#505050"/></svg>
<span class="t ar wm" style="font-size:72px;color:#70757d;font-weight:700;transform:scaleX(0.8734);left:845.00px;top:826.00px;">مستقل</span>
<span class="t wm" style="font-size:37px;color:#70757d;font-weight:700;letter-spacing:0.170px;left:845.00px;top:900.00px;">mostaql.com</span>
<div class="b" style="left:2px;top:270px;width:21px;height:693px;background:#161616;border-radius:10px;"></div>
<svg class="b" style="left:6px;top:275px;" width="14" height="10" viewBox="0 0 14 10"><path d="M7 2.2 L11.8 8.2 L2.2 8.2 Z" fill="#9a9a9a" stroke="#9a9a9a" stroke-width="1.4" stroke-linejoin="round"/></svg>
<div class="b" style="left:7px;top:291px;width:11px;height:21px;background:#9a9a9a;border-radius:5.5px;"></div>
<svg class="b" style="left:6px;top:949px;" width="14" height="11" viewBox="0 0 14 11"><path d="M7 9 L11.8 2.6 L2.2 2.6 Z" fill="#9a9a9a" stroke="#9a9a9a" stroke-width="1.4" stroke-linejoin="round"/></svg>
<svg class="b" style="left:18px;top:18px;" width="24" height="24" viewBox="18 18 24 24"><rect x="22.6" y="20" width="16.6" height="20" rx="2.2" fill="#15803d"/><path d="M30.6 20 h6.4 a2.2 2.2 0 0 1 2.2 2.2 v4 h-8.6z" fill="#d4d9a2"/><path d="M22.6 22.2 a2.2 2.2 0 0 1 2.2 -2.2 h5.8 v6.2 h-8z" fill="#7cc592"/><rect x="30.6" y="26.2" width="8.6" height="7" fill="#15803d"/><path d="M22.6 33.2 h16.6 v4.6 a2.2 2.2 0 0 1 -2.2 2.2 h-12.2 a2.2 2.2 0 0 1 -2.2 -2.2z" fill="#127334"/><rect x="20" y="26.4" width="9.8" height="10.2" rx="1.4" fill="#0f6e32"/></svg>
<span class="t " style="font-size:11.5px;color:#fff;font-weight:700;transform:scaleX(0.8741);left:22.80px;top:24.70px;">x</span>
<svg class="b" style="left:58px;top:18px;" width="24" height="24" viewBox="58 18 24 24"><path d="M60.7 20.7 H79.3 V39.3 H63.6 L60.7 36.4 Z" fill="none" stroke="#e6e6e6" stroke-width="1.4" stroke-linecap="round" stroke-linejoin="round"/><path d="M65 21 V27.2 H76 V21 M65.5 39 V32.6 H75.5 V39" fill="none" stroke="#e6e6e6" stroke-width="1.4" /></svg>
<svg class="b" style="left:94px;top:18px;" width="24" height="24" viewBox="94 18 24 24"><path d="M96.7 20.6 V28.6 H104.8" fill="none" stroke="#e6e6e6" stroke-width="1.5" stroke-linecap="round" stroke-linejoin="round"/><path d="M97 28.3 C100 22.8 106.5 20 110.6 22.6 C114.8 25.4 114 30.2 110.8 33.2 L103.2 39.6" fill="none" stroke="#e6e6e6" stroke-width="1.5" stroke-linecap="round" stroke-linejoin="round"/></svg>
<svg class="b" style="left:122px;top:26.5px;" width="9.5" height="6.2" viewBox="0 0 9.5 6.2"><path d="M1.5 1.5 L4.75 4.7 L8.0 1.5" fill="none" stroke="#e6e6e6" stroke-width="1.25" stroke-linecap="round" stroke-linejoin="round"/></svg>
<svg class="b" style="left:142px;top:18px;" width="24" height="24" viewBox="142 18 24 24"><path d="M161.3 20.6 V28.6 H153.2" fill="none" stroke="#6a6a6a" stroke-width="1.5" stroke-linecap="round" stroke-linejoin="round"/><path d="M161 28.3 C158 22.8 151.5 20 147.4 22.6 C143.2 25.4 144 30.2 147.2 33.2 L154.8 39.6" fill="none" stroke="#6a6a6a" stroke-width="1.5" stroke-linecap="round" stroke-linejoin="round"/></svg>
<svg class="b" style="left:170px;top:26.5px;" width="9.5" height="6.2" viewBox="0 0 9.5 6.2"><path d="M1.5 1.5 L4.75 4.7 L8.0 1.5" fill="none" stroke="#5a5a5a" stroke-width="1.25" stroke-linecap="round" stroke-linejoin="round"/></svg>
<svg class="b" style="left:194px;top:24px;" width="14" height="14" viewBox="194 24 14 14"><path d="M196.3 27.3 H204.2" fill="none" stroke="#e6e6e6" stroke-width="1.4" /><path d="M196.5 30.6 L200.2 34.3 L204 30.6" fill="none" stroke="#e6e6e6" stroke-width="1.4" stroke-linecap="round" stroke-linejoin="round"/></svg>
<svg class="b" style="left:755px;top:19px;" width="24" height="24" viewBox="755 19 24 24"><circle cx="768.3" cy="27.8" r="5.6" fill="none" stroke="#bdbdbd" stroke-width="1.4"/><path d="M764.2 31.9 L757.7 38.4" fill="none" stroke="#bdbdbd" stroke-width="1.4" stroke-linecap="round" stroke-linejoin="round"/></svg>
<svg class="b" style="left:1760px;top:20px;" width="20" height="20" viewBox="1760 20 20 20"><path d="M1763.8 29.5 H1776.4" fill="none" stroke="#fff" stroke-width="1.3" /></svg>
<svg class="b" style="left:1820px;top:20px;" width="20" height="20" viewBox="1820 20 20 20"><rect x="1823.6" y="26" width="10" height="10" rx="2" fill="none" stroke="#fff" stroke-width="1.3"/><path d="M1826.2 23.6 H1833.6 a2.6 2.6 0 0 1 2.6 2.6 V33.4" fill="none" stroke="#fff" stroke-width="1.3" /></svg>
<svg class="b" style="left:1880px;top:20px;" width="20" height="20" viewBox="1880 20 20 20"><path d="M1884 23.8 L1896.4 36.4 M1896.4 23.8 L1884 36.4" fill="none" stroke="#fff" stroke-width="1.3" stroke-linecap="round" stroke-linejoin="round"/></svg>
<svg class="b" style="left:1818px;top:68px;" width="20" height="20" viewBox="1818 68 20 20"><path d="M1824.5 76.5 H1821.3 V86.2 H1832.6 V83" fill="none" stroke="#000" stroke-width="1.3" stroke-linecap="round" stroke-linejoin="round"/><path d="M1825.6 82.6 C1825.8 78.4 1828 76.2 1831 76.2 V73.4 L1835.4 77.6 L1831 81.6 V79 C1828.6 79 1826.8 80.2 1825.6 82.6 Z" fill="none" stroke="#000" stroke-width="1.2" stroke-linecap="round" stroke-linejoin="round"/></svg>
<svg class="b" style="left:1891px;top:76.3px;" width="9.5" height="6.2" viewBox="0 0 9.5 6.2"><path d="M1.5 1.5 L4.75 4.7 L8.0 1.5" fill="none" stroke="#000" stroke-width="1.25" stroke-linecap="round" stroke-linejoin="round"/></svg>
<svg class="b" style="left:34px;top:104px;" width="42" height="46" viewBox="34 104 42 46"><path d="M39 115.2 H61.8 V122.4" fill="none" stroke="#e8834f" stroke-width="3.6"/><path d="M39 113.4 V141.6 H53.4" fill="none" stroke="#e8834f" stroke-width="3.6"/><path d="M37.4 113.6 V143.3 H53" fill="none" stroke="#f0c070" stroke-width="0.8"/><path d="M42.6 118.2 V113 H45.6 C45.6 106.6 55.6 106.6 55.6 113 H58.6 V118.2 Z" fill="#292929" stroke="#b4b4b4" stroke-width="1.5"/><rect x="54" y="123.7" width="16.4" height="21.4" fill="#292929" stroke="#c8c8c8" stroke-width="1.5"/></svg>
<svg class="b" style="left:46px;top:176.3px;" width="9.3" height="6.2" viewBox="0 0 9.3 6.2"><path d="M1.5 1.5 L4.65 4.7 L7.800000000000001 1.5" fill="none" stroke="#e6e6e6" stroke-width="1.25" stroke-linecap="round" stroke-linejoin="round"/></svg>
<svg class="b" style="left:84px;top:104px;" width="20" height="26" viewBox="84 104 20 26"><path d="M90.6 107.2 L96.6 121.6 M97.4 107.2 L91.4 121.6" fill="none" stroke="#c8c8c8" stroke-width="1.3" stroke-linecap="round" stroke-linejoin="round"/><circle cx="90.2" cy="124.6" r="1.9" fill="none" stroke="#3a96dd" stroke-width="1.3"/><circle cx="97.8" cy="124.6" r="1.9" fill="none" stroke="#3a96dd" stroke-width="1.3"/></svg>
<svg class="b" style="left:82px;top:137px;" width="26" height="26" viewBox="82 137 26 26"><path d="M91.5 156.5 H84.8 V139.8 H92 L94.2 142" fill="none" stroke="#c8c8c8" stroke-width="1.4" stroke-linecap="round" stroke-linejoin="round"/><path d="M91.8 143.8 H99.4 L103.4 147.8 V158.6 H91.8 Z" fill="#292929" stroke="#c8c8c8" stroke-width="1.4" stroke-linecap="round" stroke-linejoin="round"/><path d="M99.2 144 V148 H103.2 M95 151.6 H100.4 M95 154.6 H100.4" fill="none" stroke="#c8c8c8" stroke-width="1.2" /></svg>
<svg class="b" style="left:119px;top:146.6px;" width="9.3" height="6.2" viewBox="0 0 9.3 6.2"><path d="M1.5 1.5 L4.65 4.7 L7.800000000000001 1.5" fill="none" stroke="#e6e6e6" stroke-width="1.25" stroke-linecap="round" stroke-linejoin="round"/></svg>
<svg class="b" style="left:82px;top:169px;" width="26" height="24" viewBox="82 169 26 24"><path d="M99.6 171.6 L103.4 174.2 L98.6 180.6 L94.8 178 Z" fill="none" stroke="#c8c8c8" stroke-width="1.3" stroke-linecap="round" stroke-linejoin="round"/><path d="M91.6 176.4 L100 182.4 L97.8 185 L89.6 179 Z" fill="none" stroke="#c8c8c8" stroke-width="1.3" stroke-linecap="round" stroke-linejoin="round"/><path d="M89.4 179.2 L84.6 180.2 L92.4 189.4 L97.6 185.2" fill="none" stroke="#f0c070" stroke-width="1.3" stroke-linecap="round" stroke-linejoin="round"/><path d="M88.6 184.6 L95.8 185.2 L92.6 188.6 Z" fill="#e8834f"/></svg>
<svg class="b" style="left:134px;top:204.5px;" width="11" height="11" viewBox="134 204.5 11 11"><path d="M134.7 211.9 V205.2 H141.4" fill="none" stroke="#e6e6e6" stroke-width="1.2" /><path d="M137.8 208.3 L143.2 213.7 M138.8 213.8 H143.3 V209.3" fill="none" stroke="#e6e6e6" stroke-width="1.2" /></svg>
<svg class="b" style="left:289.8px;top:124.6px;" width="9.2" height="6.2" viewBox="0 0 9.2 6.2"><path d="M1.5 1.5 L4.6 4.7 L7.699999999999999 1.5" fill="none" stroke="#e6e6e6" stroke-width="1.25" stroke-linecap="round" stroke-linejoin="round"/></svg>
<svg class="b" style="left:354.8px;top:124.6px;" width="9.2" height="6.2" viewBox="0 0 9.2 6.2"><path d="M1.5 1.5 L4.6 4.7 L7.699999999999999 1.5" fill="none" stroke="#e6e6e6" stroke-width="1.25" stroke-linecap="round" stroke-linejoin="round"/></svg>
<span class="t " style="font-size:21.5px;color:#c8c8c8;transform:scaleX(0.9760);left:375.00px;top:114.00px;">A</span>
<svg class="b" style="left:386px;top:116px;" width="10" height="8" viewBox="386 116 10 8"><path d="M388.2 121.8 L391.2 118.8 L394.2 121.8" fill="none" stroke="#3a96dd" stroke-width="1.4" stroke-linecap="round" stroke-linejoin="round"/></svg>
<span class="t " style="font-size:16.8px;color:#c8c8c8;transform:scaleX(0.9819);left:409.30px;top:118.00px;">A</span>
<svg class="b" style="left:418px;top:116px;" width="10" height="8" viewBox="418 116 10 8"><path d="M420 118.8 L423 121.8 L426 118.8" fill="none" stroke="#3a96dd" stroke-width="1.4" stroke-linecap="round" stroke-linejoin="round"/></svg>
<svg class="b" style="left:256.8px;top:164.5px;" width="9.2" height="6.2" viewBox="0 0 9.2 6.2"><path d="M1.5 1.5 L4.6 4.7 L7.699999999999999 1.5" fill="none" stroke="#e6e6e6" stroke-width="1.25" stroke-linecap="round" stroke-linejoin="round"/></svg>
<svg class="b" style="left:280px;top:155px;" width="24" height="24" viewBox="280 155 24 24"><path d="M282.5 157.5 H300.5 M282.5 166 H300.5 M282.5 157.5 V174 M291.5 157.5 V174 M300.5 157.5 V174" fill="none" stroke="#c8c8c8" stroke-width="1.2" stroke-dasharray="1.2 1.3"/><path d="M281.8 175 H301.2" fill="none" stroke="#c8c8c8" stroke-width="1.8" /></svg>
<svg class="b" style="left:310.9px;top:164.5px;" width="9.2" height="6.2" viewBox="0 0 9.2 6.2"><path d="M1.5 1.5 L4.6 4.7 L7.699999999999999 1.5" fill="none" stroke="#e6e6e6" stroke-width="1.25" stroke-linecap="round" stroke-linejoin="round"/></svg>
<svg class="b" style="left:334px;top:154px;" width="26" height="26" viewBox="334 154 26 26"><path d="M345.6 160.2 L352.6 166.4 L345.8 171.4 L339.4 165.4 Z" fill="none" stroke="#c8c8c8" stroke-width="1.4" stroke-linecap="round" stroke-linejoin="round"/><path d="M345.4 163 V159 C345.4 156.4 349 156.4 349 159 V163.2" fill="none" stroke="#c8c8c8" stroke-width="1.3" stroke-linecap="round" stroke-linejoin="round"/><path d="M352.4 161.4 C354.6 163.6 355 166.4 354.2 169 C353 167 352.2 165.4 351.2 163.4 Z" fill="#3a96dd"/><rect x="336" y="172" width="20" height="5" fill="#e8b962"/></svg>
<svg class="b" style="left:364.8px;top:164.5px;" width="9.2" height="6.2" viewBox="0 0 9.2 6.2"><path d="M1.5 1.5 L4.6 4.7 L7.699999999999999 1.5" fill="none" stroke="#e6e6e6" stroke-width="1.25" stroke-linecap="round" stroke-linejoin="round"/></svg>
<span class="t " style="font-size:18.6px;color:#c8c8c8;left:391.00px;top:153.80px;">A</span>
<div class="b" style="left:387px;top:172px;width:20px;height:5px;background:#c42411;"></div>
<svg class="b" style="left:415.7px;top:164.5px;" width="9.2" height="6.2" viewBox="0 0 9.2 6.2"><path d="M1.5 1.5 L4.6 4.7 L7.699999999999999 1.5" fill="none" stroke="#e6e6e6" stroke-width="1.25" stroke-linecap="round" stroke-linejoin="round"/></svg>
<svg class="b" style="left:426px;top:204.5px;" width="11" height="11" viewBox="426 204.5 11 11"><path d="M426.7 211.9 V205.2 H433.4" fill="none" stroke="#e6e6e6" stroke-width="1.2" /><path d="M429.8 208.3 L435.2 213.7 M430.8 213.8 H435.3 V209.3" fill="none" stroke="#e6e6e6" stroke-width="1.2" /></svg>
<svg class="b" style="left:455px;top:114px;" width="22" height="18" viewBox="455 114 22 18"><path d="M456.8 117.8 H475 M459.6 122.8 H472.2 M456.8 127.8 H475 " fill="none" stroke="#c8c8c8" stroke-width="1.6" /></svg>
<svg class="b" style="left:487px;top:118px;" width="22" height="18" viewBox="487 118 22 18"><path d="M488.8 121.3 H507 M491.6 126.3 H504.2 M488.8 131.3 H507 " fill="none" stroke="#c8c8c8" stroke-width="1.6" /></svg>
<svg class="b" style="left:519px;top:123px;" width="22" height="18" viewBox="519 123 22 18"><path d="M520.8 126.4 H539 M523.6 131.4 H536.2 M520.8 136.4 H539 " fill="none" stroke="#c8c8c8" stroke-width="1.6" /></svg>
<svg class="b" style="left:552px;top:112px;" width="26" height="26" viewBox="552 112 26 26"><text x="558.6" y="131.4" font-size="13" fill="#c8c8c8" font-family="Liberation Sans, sans-serif" transform="rotate(-45 558.6 131.4)">ab</text><path d="M561.4 135.6 L574.2 122.8 M568.2 122.6 H574.4 V128.8" fill="none" stroke="#2ea3d9" stroke-width="1.5" stroke-linecap="round" stroke-linejoin="round"/></svg>
<svg class="b" style="left:581.9px;top:124.5px;" width="9.2" height="6.2" viewBox="0 0 9.2 6.2"><path d="M1.5 1.5 L4.6 4.7 L7.699999999999999 1.5" fill="none" stroke="#e6e6e6" stroke-width="1.25" stroke-linecap="round" stroke-linejoin="round"/></svg>
<svg class="b" style="left:610px;top:120px;" width="20" height="14" viewBox="610 120 20 14"><path d="M612.8 123.6 L617 127.3 L612.8 131" fill="none" stroke="#3a96dd" stroke-width="1.5" stroke-linecap="round" stroke-linejoin="round"/><path d="M623.2 122.4 V132 M626.2 122.4 V132 M627.6 122.4 H622.4" fill="none" stroke="#c8c8c8" stroke-width="1.3" /><path d="M623.2 121.8 H622.2 A2.9 2.9 0 0 0 622.2 127.6 H623.2 Z" fill="#c8c8c8"/></svg>
<svg class="b" style="left:638.9px;top:124.5px;" width="9.2" height="6.2" viewBox="0 0 9.2 6.2"><path d="M1.5 1.5 L4.6 4.7 L7.699999999999999 1.5" fill="none" stroke="#e6e6e6" stroke-width="1.25" stroke-linecap="round" stroke-linejoin="round"/></svg>
<svg class="b" style="left:455px;top:156px;" width="22" height="20" viewBox="455 156 22 20"><path d="M456.8 159 H475 M456.8 164 H470 M456.8 169 H475 M456.8 174 H470 " fill="none" stroke="#c8c8c8" stroke-width="1.6" /></svg>
<svg class="b" style="left:487px;top:156px;" width="22" height="20" viewBox="487 156 22 20"><path d="M488.8 159 H507 M491.6 164 H504.2 M488.8 169 H507 M491.6 174 H504.2 " fill="none" stroke="#c8c8c8" stroke-width="1.6" /></svg>
<svg class="b" style="left:519px;top:156px;" width="22" height="20" viewBox="519 156 22 20"><path d="M520.8 159 H539 M526 164 H539 M520.8 169 H539 M526 174 H539 " fill="none" stroke="#c8c8c8" stroke-width="1.6" /></svg>
<svg class="b" style="left:554px;top:156px;" width="22" height="20" viewBox="554 156 22 20"><path d="M555.8 159 H574 M566 164 H574 M566 169 H574 M555.8 174 H574 " fill="none" stroke="#c8c8c8" stroke-width="1.6" /><path d="M556 166.5 H563 M560.2 163.4 L563.4 166.5 L560.2 169.6" fill="none" stroke="#3a96dd" stroke-width="1.4" stroke-linecap="round" stroke-linejoin="round"/></svg>
<svg class="b" style="left:586px;top:156px;" width="22" height="20" viewBox="586 156 22 20"><path d="M587.8 159 H606 M598 164 H606 M598 169 H606 M587.8 174 H606 " fill="none" stroke="#c8c8c8" stroke-width="1.6" /><path d="M588.6 166.5 H595.6 M591.6 163.4 L588.4 166.5 L591.6 169.6" fill="none" stroke="#3a96dd" stroke-width="1.4" stroke-linecap="round" stroke-linejoin="round"/></svg>
<span class="t " style="font-size:12.5px;color:#c8c8c8;letter-spacing:0.596px;left:677.00px;top:115.60px;">ab</span>
<span class="t " style="font-size:12.5px;color:#c8c8c8;letter-spacing:-0.750px;left:677.00px;top:125.20px;">c</span>
<svg class="b" style="left:683px;top:126px;" width="14" height="12" viewBox="683 126 14 12"><path d="M687 128.4 H691 A2.6 2.6 0 0 1 691 133.6 H685.2 M688 130.6 L685 133.6 L688 136.6" fill="none" stroke="#3a96dd" stroke-width="1.4" stroke-linecap="round" stroke-linejoin="round"/></svg>
<svg class="b" style="left:672px;top:155px;" width="24" height="24" viewBox="672 155 24 24"><rect x="674.7" y="157.7" width="18" height="18" fill="none" stroke="#7a7a7a" stroke-width="1.4"/><path d="M674.7 162.4 H692.7 M674.7 171 H692.7 M683.7 157.7 V162.4 M683.7 171 V175.7" fill="none" stroke="#7a7a7a" stroke-width="1.4" /><path d="M677.6 166.7 H689.8 M679.8 164.4 L677.4 166.7 L679.8 169 M687.6 164.4 L690 166.7 L687.6 169" fill="none" stroke="#7a7a7a" stroke-width="1.2" stroke-linecap="round" stroke-linejoin="round"/></svg>
<svg class="b" style="left:826.7px;top:164.6px;" width="9.2" height="6.2" viewBox="0 0 9.2 6.2"><path d="M1.5 1.5 L4.6 4.7 L7.699999999999999 1.5" fill="none" stroke="#6a6a6a" stroke-width="1.25" stroke-linecap="round" stroke-linejoin="round"/></svg>
<svg class="b" style="left:842px;top:204.5px;" width="11" height="11" viewBox="842 204.5 11 11"><path d="M842.7 211.9 V205.2 H849.4" fill="none" stroke="#e6e6e6" stroke-width="1.2" /><path d="M845.8 208.3 L851.2 213.7 M846.8 213.8 H851.3 V209.3" fill="none" stroke="#e6e6e6" stroke-width="1.2" /></svg>
<svg class="b" style="left:1035px;top:124.6px;" width="9.2" height="6.2" viewBox="0 0 9.2 6.2"><path d="M1.5 1.5 L4.6 4.7 L7.699999999999999 1.5" fill="none" stroke="#e6e6e6" stroke-width="1.25" stroke-linecap="round" stroke-linejoin="round"/></svg>
<svg class="b" style="left:900.9px;top:164.6px;" width="9.2" height="6.2" viewBox="0 0 9.2 6.2"><path d="M1.5 1.5 L4.6 4.7 L7.699999999999999 1.5" fill="none" stroke="#e6e6e6" stroke-width="1.25" stroke-linecap="round" stroke-linejoin="round"/></svg>
<svg class="b" style="left:958px;top:156px;" width="16" height="22" viewBox="958 156 16 22"><circle cx="965.4" cy="163.5" r="4.6" fill="#c8c8c8"/><path d="M969.9 162.6 C970.8 168.6 967.2 173.4 961.6 175.1 L961 174.1 C964.4 172.2 966.6 169.6 966.7 166.4 Z" fill="#c8c8c8"/></svg>
<span class="t " style="font-size:11px;color:#c8c8c8;transform:scaleX(0.9796);left:1003.00px;top:155.00px;">0</span>
<span class="t " style="font-size:11px;color:#c8c8c8;transform:scaleX(1.0721);left:993.00px;top:166.00px;">.00</span>
<svg class="b" style="left:988px;top:158px;" width="14" height="10" viewBox="988 158 14 10"><path d="M991 162.6 H1001 M994.6 159.2 L991 162.6 L994.6 166" fill="none" stroke="#3a96dd" stroke-width="1.4" stroke-linecap="round" stroke-linejoin="round"/></svg>
<span class="t " style="font-size:11px;color:#c8c8c8;transform:scaleX(1.0721);left:1024.60px;top:155.00px;">.00</span>
<span class="t " style="font-size:11px;color:#c8c8c8;transform:scaleX(1.0231);left:1031.60px;top:166.00px;">.0</span>
<svg class="b" style="left:1020px;top:167px;" width="14" height="10" viewBox="1020 167 14 10"><path d="M1022.4 171.6 H1032.4 M1028.8 168.2 L1032.4 171.6 L1028.8 175" fill="none" stroke="#3a96dd" stroke-width="1.4" stroke-linecap="round" stroke-linejoin="round"/></svg>
<svg class="b" style="left:1042px;top:204.5px;" width="11" height="11" viewBox="1042 204.5 11 11"><path d="M1042.7 211.9 V205.2 H1049.4" fill="none" stroke="#e6e6e6" stroke-width="1.2" /><path d="M1045.8 208.3 L1051.2 213.7 M1046.8 213.8 H1051.3 V209.3" fill="none" stroke="#e6e6e6" stroke-width="1.2" /></svg>
<svg class="b" style="left:1093px;top:110px;" width="42" height="34" viewBox="1093 110 42 34"><path d="M1095.5 112.5 H1130.9 V139.5 H1095.5 Z M1102 112.5 V139.5 M1118.6 112.5 V139.5 M1124.4 112.5 V139.5 M1095.5 121.4 H1130.9 M1095.5 130.2 H1130.9 " fill="none" stroke="#a0a0a0" stroke-width="1.5" /><rect x="1102.4" y="112.8" width="15.8" height="8.6" fill="#c2240e" stroke="#f0804a" stroke-width="0.9"/><rect x="1102.4" y="122.5" width="10.2" height="6.8" fill="#1470c8" stroke="#f0804a" stroke-width="0.9"/><rect x="1102.4" y="130.4" width="18.6" height="9" fill="#c2240e" stroke="#f0804a" stroke-width="0.9"/></svg>
<svg class="b" style="left:1147px;top:174.6px;" width="9" height="6.2" viewBox="0 0 9 6.2"><path d="M1.5 1.5 L4.5 4.7 L7.5 1.5" fill="none" stroke="#e6e6e6" stroke-width="1.25" stroke-linecap="round" stroke-linejoin="round"/></svg>
<svg class="b" style="left:1177px;top:110px;" width="46" height="40" viewBox="1177 110 46 40"><rect x="1191" y="121.6" width="24" height="18" fill="#0f6cbd"/><path d="M1179.5 112.5 H1214.9 V139.5 H1179.5 Z M1191 112.5 V139.5 M1203 112.5 V139.5 M1179.5 121.4 H1214.9 M1179.5 130.6 H1214.9 " fill="none" stroke="#a0a0a0" stroke-width="1.5" /><path d="M1191 121.4 H1215 M1191 130.6 H1215 M1203 121.4 V139.5" fill="none" stroke="#5eb3f0" stroke-width="0.8" /><path d="M1216.0 122.0 L1217.6000000000001 123.39999999999999 C1213.4 130.6 1208.4 136.2 1204.8000000000002 139.2 L1202.2 136.79999999999998 C1205.4 132.6 1210.4 126.6 1216.0 122.0 Z" fill="#bdbdbd" stroke="#292929" stroke-width="0.7"/><path d="M1201.8000000000002 136.6 L1205.2 139.79999999999998 C1205.2 144.0 1200.0 146.6 1191.8000000000002 144.6 C1195.8000000000002 143.79999999999998 1196.2 141.4 1197.0 139.2 C1198.0 136.79999999999998 1200.0 136.0 1201.8000000000002 136.6 Z" fill="#3a96dd"/></svg>
<svg class="b" style="left:1212.2px;top:174.6px;" width="9" height="6.2" viewBox="0 0 9 6.2"><path d="M1.5 1.5 L4.5 4.7 L7.5 1.5" fill="none" stroke="#e6e6e6" stroke-width="1.25" stroke-linecap="round" stroke-linejoin="round"/></svg>
<svg class="b" style="left:1244px;top:110px;" width="46" height="40" viewBox="1244 110 46 40"><path d="M1246.7 112.5 H1281.9 V139.5 H1246.7 Z M1253.4 112.5 V139.5 M1275 112.5 V139.5 M1246.7 118.8 H1281.9 M1246.7 134 H1281.9 " fill="none" stroke="#a0a0a0" stroke-width="1.5" /><rect x="1253.4" y="118.8" width="21.6" height="15.2" fill="#0f6cbd" stroke="#5eb3f0" stroke-width="0.8"/><path d="M1283.0 122.0 L1284.6000000000001 123.39999999999999 C1280.4 130.6 1275.4 136.2 1271.8000000000002 139.2 L1269.2 136.79999999999998 C1272.4 132.6 1277.4 126.6 1283.0 122.0 Z" fill="#bdbdbd" stroke="#292929" stroke-width="0.7"/><path d="M1268.8000000000002 136.6 L1272.2 139.79999999999998 C1272.2 144.0 1267.0 146.6 1258.8000000000002 144.6 C1262.8000000000002 143.79999999999998 1263.2 141.4 1264.0 139.2 C1265.0 136.79999999999998 1267.0 136.0 1268.8000000000002 136.6 Z" fill="#3a96dd"/></svg>
<svg class="b" style="left:1280px;top:174.6px;" width="9" height="6.2" viewBox="0 0 9 6.2"><path d="M1.5 1.5 L4.5 4.7 L7.5 1.5" fill="none" stroke="#e6e6e6" stroke-width="1.25" stroke-linecap="round" stroke-linejoin="round"/></svg>
<svg class="b" style="left:1316px;top:104px;" width="48" height="40" viewBox="1316 104 48 40"><path d="M1321.7 112.5 H1356.7 V139.5 H1321.7 Z M1333.2 112.5 V139.5 M1345 112.5 V139.5 M1321.7 121.2 H1356.7 M1321.7 131 H1356.7 " fill="none" stroke="#a8a8a8" stroke-width="1.5" /><rect x="1326.6" y="121.6" width="32.2" height="9.2" fill="#0f6cbd" stroke="#5eb3f0" stroke-width="0.9"/><path d="M1345 121.6 V130.8" fill="none" stroke="#5eb3f0" stroke-width="0.9" stroke-dasharray="1.2 1.2"/><path d="M1319.6 126 H1336.4 M1327.8 117.4 L1319.4 126 L1327.8 134.4" fill="none" stroke="#3a96dd" stroke-width="1.5" stroke-linecap="round" stroke-linejoin="round"/></svg>
<svg class="b" style="left:1333.7px;top:176.3px;" width="9.4" height="6.2" viewBox="0 0 9.4 6.2"><path d="M1.5 1.5 L4.7 4.7 L7.9 1.5" fill="none" stroke="#e6e6e6" stroke-width="1.25" stroke-linecap="round" stroke-linejoin="round"/></svg>
<svg class="b" style="left:1370px;top:104px;" width="48" height="40" viewBox="1370 104 48 40"><path d="M1375.7 121 V112.5 H1410.7 V121 M1375.7 131 V139.5 H1410.7 V131 M1387.4 112.5 V121 M1399 112.5 V121 M1387.4 131 V139.5 M1399 131 V139.5 M1375.7 121 H1381 M1375.7 131 H1381 M1404 121 H1410.7 M1404 131 H1410.7" fill="none" stroke="#a8a8a8" stroke-width="1.5" /><path d="M1380.6 121.6 H1396.6 L1401.2 126.2 L1396.6 130.8 H1380.6 Z" fill="#0f6cbd" stroke="#5eb3f0" stroke-width="0.9"/><path d="M1390 121.6 V130.8" fill="none" stroke="#5eb3f0" stroke-width="0.9" stroke-dasharray="1.2 1.2"/><path d="M1398.2 119.4 L1412 133.6 M1412 119.4 L1398.2 133.6" fill="none" stroke="#e8562a" stroke-width="1.5" stroke-linecap="round" stroke-linejoin="round"/></svg>
<svg class="b" style="left:1387.9px;top:176.3px;" width="9.4" height="6.2" viewBox="0 0 9.4 6.2"><path d="M1.5 1.5 L4.7 4.7 L7.9 1.5" fill="none" stroke="#e6e6e6" stroke-width="1.25" stroke-linecap="round" stroke-linejoin="round"/></svg>
<svg class="b" style="left:1426px;top:104px;" width="42" height="40" viewBox="1426 104 42 40"><path d="M1429.6 112.5 H1464.6 V139.5 H1429.6 Z M1438.2 112.5 V139.5 M1456 112.5 V139.5 M1429.6 121.2 H1464.6 M1429.6 131 H1464.6 " fill="none" stroke="#a8a8a8" stroke-width="1.5" /><rect x="1438.4" y="121.6" width="17.6" height="9.2" fill="#0f6cbd" stroke="#5eb3f0" stroke-width="0.9"/><path d="M1437.4 108 H1456.8 M1437.4 105.8 V110.2 M1456.8 105.8 V110.2" fill="none" stroke="#3a96dd" stroke-width="1.3" /></svg>
<svg class="b" style="left:1441.9px;top:174.4px;" width="9.4" height="6.2" viewBox="0 0 9.4 6.2"><path d="M1.5 1.5 L4.7 4.7 L7.9 1.5" fill="none" stroke="#e6e6e6" stroke-width="1.25" stroke-linecap="round" stroke-linejoin="round"/></svg>
<svg class="b" style="left:1498px;top:106px;" width="22" height="22" viewBox="1498 106 22 22"><path d="M1516.4 112.2 V109 H1501.6 L1510.4 117.4 L1501.6 125.6 H1516.4 V122.4" fill="none" stroke="#c8c8c8" stroke-width="1.5" stroke-linejoin="miter"/></svg>
<svg class="b" style="left:1606.5px;top:114.6px;" width="9.4" height="6.2" viewBox="0 0 9.4 6.2"><path d="M1.5 1.5 L4.7 4.7 L7.9 1.5" fill="none" stroke="#e6e6e6" stroke-width="1.25" stroke-linecap="round" stroke-linejoin="round"/></svg>
<svg class="b" style="left:1497px;top:138px;" width="24" height="22" viewBox="1497 138 24 22"><rect x="1499.8" y="140.7" width="18.8" height="16.4" fill="none" stroke="#c8c8c8" stroke-width="1.4"/><path d="M1499.8 143.6 H1518.6" fill="none" stroke="#c8c8c8" stroke-width="1.3" /><path d="M1509.2 146.4 V154.4 M1505.8 151.2 L1509.2 154.6 L1512.6 151.2" fill="none" stroke="#3a96dd" stroke-width="1.4" stroke-linecap="round" stroke-linejoin="round"/></svg>
<svg class="b" style="left:1546.8px;top:145.5px;" width="9.2" height="6.2" viewBox="0 0 9.2 6.2"><path d="M1.5 1.5 L4.6 4.7 L7.699999999999999 1.5" fill="none" stroke="#e6e6e6" stroke-width="1.25" stroke-linecap="round" stroke-linejoin="round"/></svg>
<svg class="b" style="left:1497px;top:169px;" width="24" height="24" viewBox="1497 169 24 24"><path d="M1510.6 172 L1518 179 L1506.4 190 L1499.4 183.2 Z" fill="none" stroke="#b4b4b4" stroke-width="1.4" stroke-linecap="round" stroke-linejoin="round"/><path d="M1503.4 179.4 L1510.2 186.2 L1506.4 189.8 L1499.6 183.2 Z" fill="#8c8c8c"/></svg>
<svg class="b" style="left:1561.9px;top:177.6px;" width="9.2" height="6.2" viewBox="0 0 9.2 6.2"><path d="M1.5 1.5 L4.6 4.7 L7.699999999999999 1.5" fill="none" stroke="#e6e6e6" stroke-width="1.25" stroke-linecap="round" stroke-linejoin="round"/></svg>
<span class="t " style="font-size:20.8px;color:#3a96dd;transform:scaleX(0.9081);left:1637.40px;top:105.60px;">A</span>
<span class="t " style="font-size:20.4px;color:#c8c8c8;transform:scaleX(0.8982);left:1637.80px;top:123.20px;">Z</span>
<svg class="b" style="left:1650px;top:114px;" width="26" height="26" viewBox="1650 114 26 26"><path d="M1652.6 118 H1672.2 V120.4 L1665 128.4 V136.6 H1660 V128.4 L1652.6 120.4 Z" fill="none" stroke="#c8c8c8" stroke-width="1.4" stroke-linejoin="round"/></svg>
<svg class="b" style="left:1669px;top:174.8px;" width="9" height="6.2" viewBox="0 0 9 6.2"><path d="M1.5 1.5 L4.5 4.7 L7.5 1.5" fill="none" stroke="#e6e6e6" stroke-width="1.25" stroke-linecap="round" stroke-linejoin="round"/></svg>
<svg class="b" style="left:1692px;top:106px;" width="44" height="42" viewBox="1692 106 44 42"><circle cx="1718.2" cy="121.8" r="12.6" fill="none" stroke="#c8c8c8" stroke-width="1.5"/><path d="M1709 131.2 L1695.8 144.2" fill="none" stroke="#c8c8c8" stroke-width="1.6" stroke-linecap="round" stroke-linejoin="round"/></svg>
<svg class="b" style="left:1731px;top:174.8px;" width="9" height="6.2" viewBox="0 0 9 6.2"><path d="M1.5 1.5 L4.5 4.7 L7.5 1.5" fill="none" stroke="#e6e6e6" stroke-width="1.25" stroke-linecap="round" stroke-linejoin="round"/></svg>
<svg class="b" style="left:1773px;top:106px;" width="40" height="40" viewBox="1773 106 40 40"><rect x="1775.8" y="108.8" width="34.6" height="34.6" fill="none" stroke="#c8431f" stroke-width="1.7"/><rect x="1779.9" y="112.6" width="11.6" height="11.4" fill="none" stroke="#c8431f" stroke-width="1.4"/><rect x="1779.9" y="128" width="11.6" height="11.4" fill="none" stroke="#c8431f" stroke-width="1.4"/><rect x="1795.3" y="112.6" width="11.6" height="11.4" fill="none" stroke="#c8431f" stroke-width="1.4"/><rect x="1795.3" y="128" width="11.6" height="11.4" fill="none" stroke="#c8431f" stroke-width="1.4"/></svg>
<svg class="b" style="left:1884px;top:199px;" width="16" height="12" viewBox="1884 199 16 12"><path d="M1886.4 202 L1892 207.6 L1897.6 202" fill="none" stroke="#e6e6e6" stroke-width="1.4" stroke-linecap="round" stroke-linejoin="round"/></svg>
<svg class="b" style="left:116px;top:243px;" width="16" height="10" viewBox="116 243 16 10"><path d="M118.4 246.4 L124 252 L129.6 246.4" fill="none" stroke="#e6e6e6" stroke-width="1.3" stroke-linecap="round" stroke-linejoin="round"/></svg>
<div class="b" style="left:148px;top:242px;width:3px;height:3px;background:#d0d0d0;border-radius:0.8px;"></div>
<div class="b" style="left:148px;top:247px;width:3px;height:3px;background:#d0d0d0;border-radius:0.8px;"></div>
<div class="b" style="left:148px;top:252px;width:3px;height:3px;background:#d0d0d0;border-radius:0.8px;"></div>
<svg class="b" style="left:168px;top:237px;" width="20" height="20" viewBox="168 237 20 20"><path d="M170.4 239.6 L185.2 254.4 M185.2 239.6 L170.4 254.4" fill="none" stroke="#6e6e6e" stroke-width="1.4" stroke-linecap="round" stroke-linejoin="round"/></svg>
<svg class="b" style="left:196px;top:237px;" width="24" height="20" viewBox="196 237 24 20"><path d="M198.2 250 L205.4 253.8 L217.6 240" fill="none" stroke="#6e6e6e" stroke-width="1.4" stroke-linecap="round" stroke-linejoin="round"/></svg>
<svg class="b" style="left:1890px;top:241px;" width="16" height="12" viewBox="1890 241 16 12"><path d="M1893 243.6 L1898.6 249.2 L1904.2 243.6" fill="none" stroke="#e6e6e6" stroke-width="1.3" stroke-linecap="round" stroke-linejoin="round"/></svg>
</body></html>
